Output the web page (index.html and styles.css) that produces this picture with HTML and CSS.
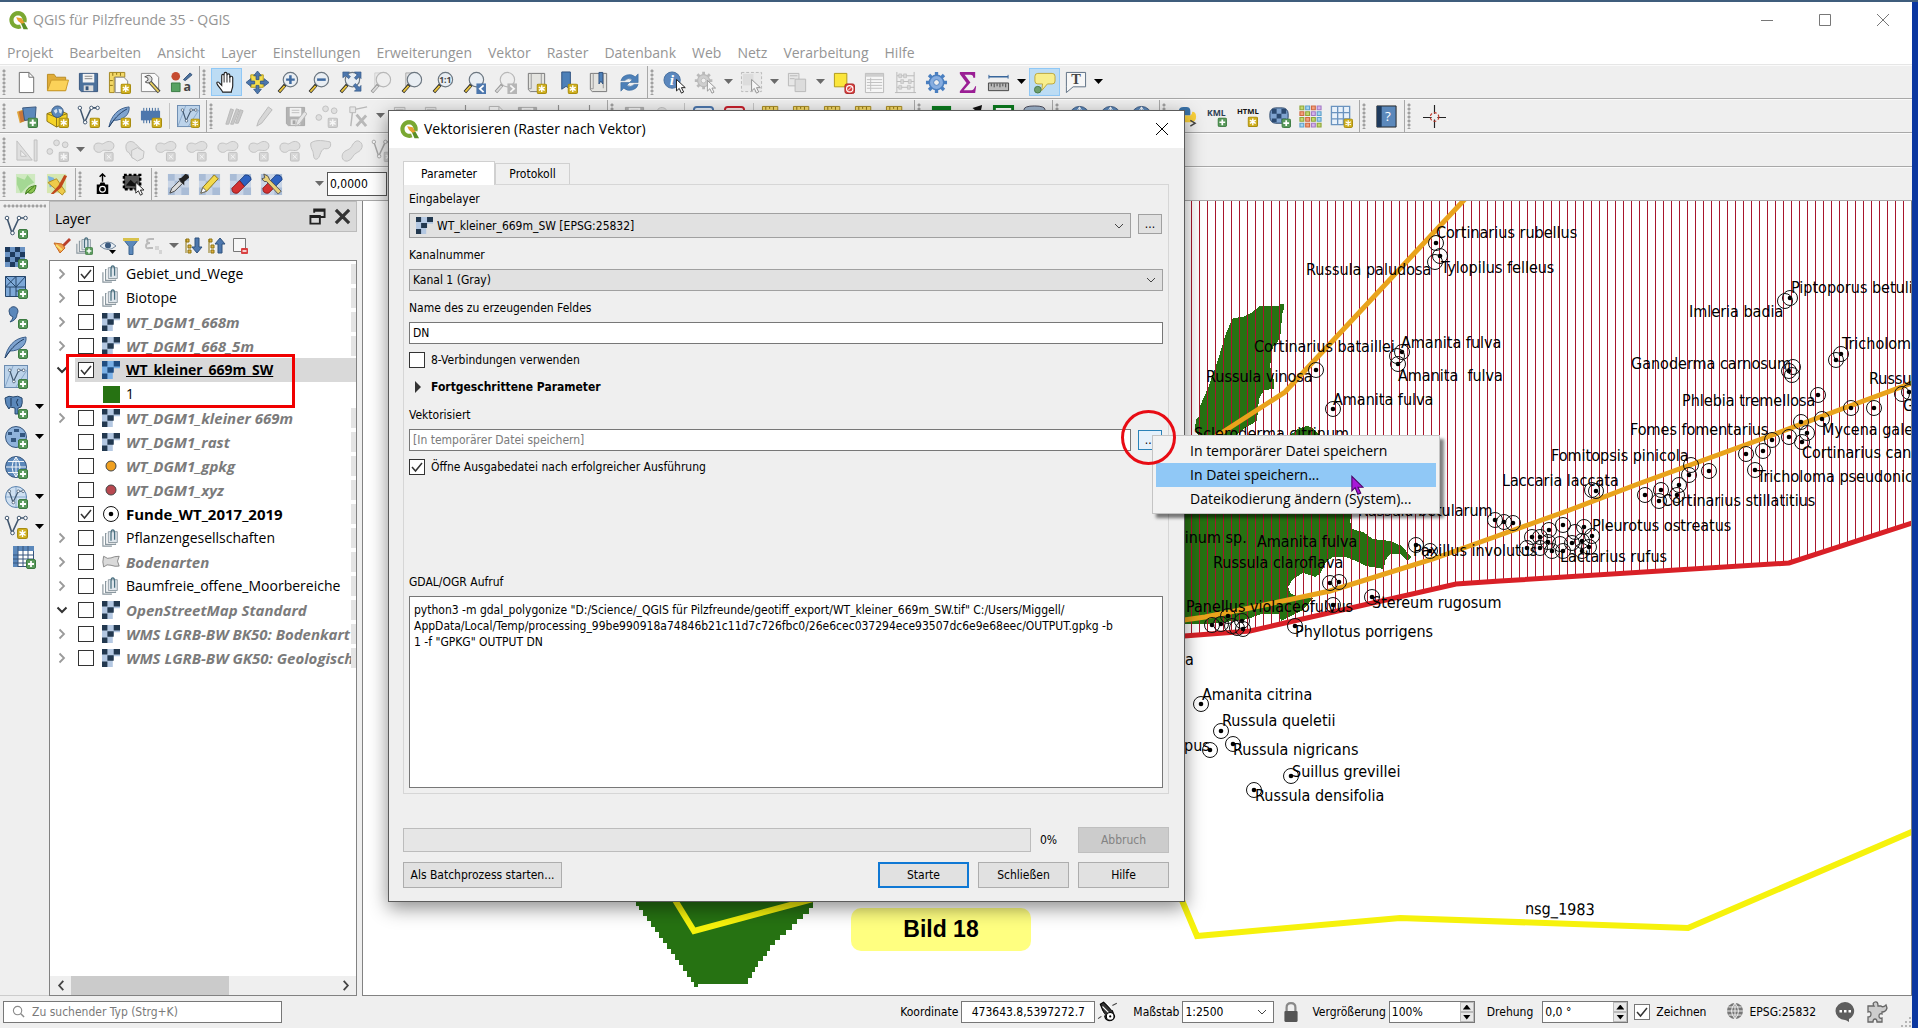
FILE: index.html
```html
<!DOCTYPE html>
<html lang="de">
<head>
<meta charset="utf-8">
<title>QGIS für Pilzfreunde 35 - QGIS</title>
<link rel="stylesheet" href="styles.css">
</head>
<body>
<svg class="defs" aria-hidden="true">
  <symbol id="b-star" viewBox="0 0 10 10"><rect x=".5" y=".5" width="9" height="9" rx="1.5" fill="#d0b020" stroke="#a88c10"/><path d="M5 1.8v6.4M2.2 3.4l5.6 3.2M7.8 3.4L2.2 6.6" stroke="#fff" stroke-width="1.3"/></symbol>
  <symbol id="b-plus" viewBox="0 0 10 10"><rect x=".5" y=".5" width="9" height="9" rx="1.5" fill="#5a9a5c" stroke="#3c7a40"/><path d="M5 2v6M2 5h6" stroke="#fff" stroke-width="1.8"/></symbol>
  <symbol id="glass" viewBox="0 0 24 24"><path d="M9 14l-7 8" stroke="#222" stroke-width="3.5"/><path d="M8 15.500l-5.500 6" stroke="#e8c440" stroke-width="2"/><circle cx="14" cy="9" r="7.500" fill="#e9eef3" stroke="#6b7680" stroke-width="1.200"/></symbol>
  <symbol id="logo" viewBox="0 0 24 24"><path d="M12 4.500a7.500 7.500 0 1 0 3 14.500M19 14a7.500 7.500 0 0 0-7-9.500" fill="none" stroke="#7aa832" stroke-width="4.500"/><path d="M14 13h4l5 9h-5z" fill="#5a8f26"/><path d="M10 9l6 1 3 5-3 1-4-3z" fill="#e8a030"/></symbol>
  <symbol id="new" viewBox="0 0 24 24"><path d="M4.500 1.500h10l5 5v16h-15z" fill="#fff" stroke="#6d6d6d"/><path d="M14.500 1.500v5h5" fill="none" stroke="#6d6d6d"/></symbol>
  <symbol id="open" viewBox="0 0 24 24"><path d="M1.500 20.500v-17h7l2 3h10v14z" fill="#e0ac38" stroke="#b98b22"/><path d="M1.500 20.500l4-11h18l-3 11z" fill="#fbd259" stroke="#c99a2b"/></symbol>
  <symbol id="save" viewBox="0 0 24 24"><path d="M2.500 2.500h19v19h-17l-2-2z" fill="#4c719c" stroke="#36557c"/><path d="M6 3h12v9H6z" fill="#f4f4f4"/><path d="M8 5.500h8M8 8h8" stroke="#888"/><path d="M7 15h10v6H7z" fill="#ddd"/><path d="M9 16h3v4H9z" fill="#36557c"/></symbol>
  <symbol id="layout" viewBox="0 0 24 24"><path d="M1.500 1.500h16v5h-11v16h-5z" fill="#f3d868" stroke="#a3861e"/><path d="M7.500 6.500h9l4 4v12h-13z" fill="#fafafa" stroke="#888"/><path d="M5 2v3M9 2v2M13 2v3M2 10h3M2 15h3" stroke="#8a7010"/><use href="#b-star" x="13" y="13" width="11" height="11"/></symbol>
  <symbol id="layouts" viewBox="0 0 24 24"><path d="M2.500 2.500h14l4 4v15h-18z" fill="#fafafa" stroke="#888"/><path d="M11 11l10 11" stroke="#444" stroke-width="4"/><path d="M11 11l9.500 10.500" stroke="#e8cf60" stroke-width="2"/><path d="M6 6l3 1 .5 2.500-3 2a4.500 4.500 0 0 0 7-2 4 4 0 0 0-4-5z" fill="#ddd" stroke="#555"/></symbol>
  <symbol id="style" viewBox="0 0 24 24"><circle cx="6" cy="5.500" r="4.500" fill="#c64b30"/><path d="M14 9l7-7 2 2-7 6z" fill="#4c719c" stroke="#36557c"/><path d="M1.500 12.500h9v9h-9z" fill="#58a262" stroke="#3a7a44"/><text x="14" y="21" class="icon-text">a</text></symbol>
  <symbol id="hand" viewBox="0 0 24 24"><path d="M8 22c-1-3-5-6-6-9-.5-2 2-2 3 0l2 2V5c0-2 2.500-2 2.500 0V3c0-2 3-2 3 0v1.500c0-2 3-2 3 0V7c0-2 3-2 3 0v8c0 3-1.500 5-1.500 7z" fill="#fff" stroke="#222" stroke-width="1.200"/><path d="M9.500 5v7M12.500 4v8M15.500 5v7" stroke="#222"/></symbol>
  <symbol id="pan" viewBox="0 0 24 24"><path d="M5 4h13v13H5z" fill="#f6dd4a" stroke="#b39a18"/><path d="M12 0l4 5h-2.500v4h-3V5H8zM12 24l4-5h-2.500v-4h-3v4H8zM0 12l5-4v2.500h4v3H5V16zM24 12l-5-4v2.500h-4v3h4V16z" fill="#4d77ad" stroke="#2f527f" stroke-width=".8"/></symbol>
  <symbol id="zin" viewBox="0 0 24 24"><use href="#glass"/><path d="M14 4.500v9M9.500 9h9" stroke="#3f6aa0" stroke-width="2.600"/></symbol>
  <symbol id="zout" viewBox="0 0 24 24"><use href="#glass"/><path d="M9.500 9h9" stroke="#3f6aa0" stroke-width="2.600"/></symbol>
  <symbol id="zfull" viewBox="0 0 24 24"><use href="#glass"/><path d="M4 1h7L9 3l3 3-2 2-3-3-3 2zM23 1v7l-2-2-3 3-2-2 3-3-3-3zM23 21h-7l2-2-3-4 2-2 4 4 2-2z" fill="#4d77ad" stroke="#2f527f" stroke-width=".6"/></symbol>
  <symbol id="zsel" viewBox="0 0 24 24"><path d="M5 2h9v14H5z" fill="#e2e2e2" stroke="#aaa"/><use href="#glass"/></symbol>
  <symbol id="z11" viewBox="0 0 24 24"><use href="#glass"/><text x="7.500" y="13" class="icon-text sm">1:1</text></symbol>
  <symbol id="zlast" viewBox="0 0 24 24"><use href="#glass"/><path d="M14 13h10v11H14z" fill="#4d77ad"/><path d="M21.500 15l-4 3.500 4 3.500" fill="none" stroke="#fff" stroke-width="1.800"/></symbol>
  <symbol id="znext" viewBox="0 0 24 24"><use href="#glass"/><path d="M14 13h10v11H14z" fill="#4d77ad"/><path d="M17 15l4 3.500-4 3.500" fill="none" stroke="#fff" stroke-width="1.800"/></symbol>
  <symbol id="map" viewBox="0 0 24 24"><path d="M3.500 2.500h17v19h-15l-2-2z" fill="#e4e4e0" stroke="#777"/><path d="M6.500 2.500v16h-3M17 3v15" stroke="#999" fill="none"/></symbol>
  <symbol id="mapnew" viewBox="0 0 24 24"><use href="#map"/><use href="#b-star" x="12" y="13" width="11" height="11"/></symbol>
  <symbol id="bmnew" viewBox="0 0 24 24"><path d="M6 1h9v18l-4.500-3L6 19z" fill="#4d80b8" stroke="#2f527f"/><use href="#b-star" x="12" y="13" width="11" height="11"/></symbol>
  <symbol id="bm" viewBox="0 0 24 24"><use href="#map"/><path d="M12.500 1.500h4v12l-2-3-2 3z" fill="#4d80b8" stroke="#2f527f"/></symbol>
  <symbol id="refresh" viewBox="0 0 24 24"><path d="M3 10a9 8 0 0 1 15-4l3-3v9h-9l3-3a6 5 0 0 0-8 1zM21 14a9 8 0 0 1-15 4l-3 3v-9h9l-3 3a6 5 0 0 0 8-1z" fill="#4d80b8" stroke="#3a689c" stroke-width=".6"/></symbol>
  <symbol id="arrowptr" viewBox="0 0 10 14"><path d="M.7.7v10.500l2.500-2.300 2 4.300 2-1-2-4h3.500z" fill="#fff" stroke="#222" stroke-width=".9"/></symbol>
  <symbol id="info" viewBox="0 0 24 24"><circle cx="9.500" cy="9.500" r="8.500" fill="#5b87bd" stroke="#456f9f"/><text x="7" y="15" class="icon-text it">i</text><use href="#arrowptr" x="13" y="8" width="12" height="16"/></symbol>
  <symbol id="gearptr" viewBox="0 0 24 24"><use href="#gear" width="20" height="20"/><use href="#arrowptr" x="13" y="9" width="11" height="15"/></symbol>
  <symbol id="gear" viewBox="0 0 24 24"><path d="M12 1v22M1 12h22M4.200 4.200l15.600 15.600M19.800 4.200L4.200 19.800" stroke="#4a7fc0" stroke-width="3.500"/><circle cx="12" cy="12" r="7.500" fill="#86ade0" stroke="#4a7fc0" stroke-width="1.500"/><circle cx="12" cy="12" r="3" fill="#efefef" stroke="#4a7fc0"/></symbol>
  <symbol id="select" viewBox="0 0 24 24"><path d="M1.500 1.500h21v20h-21z" fill="#e4e4d4" stroke="#777" stroke-dasharray="3 2"/><path d="M3 3h11v12H3z" fill="#c8c8a8"/><use href="#arrowptr" x="11" y="8" width="12" height="16"/></symbol>
  <symbol id="forms" viewBox="0 0 24 24"><path d="M2.500 2.500h11v13h-11z" fill="#ddd" stroke="#777"/><path d="M9.500 8.500h11v13h-11z" fill="#c8c8a8" stroke="#777"/><path d="M4 5h8M4 8h5" stroke="#777"/></symbol>
  <symbol id="desel" viewBox="0 0 24 24"><path d="M2.500 2.500h13v14h-13z" fill="#fbe63c" stroke="#b09a18"/><rect x="13.500" y="13.500" width="10" height="10" rx="2" fill="#d84040" stroke="#a82828"/><circle cx="18.500" cy="18.500" r="3.300" fill="#d84040" stroke="#fff" stroke-width="1.200"/><path d="M16.500 20.500l4-4" stroke="#fff"/></symbol>
  <symbol id="table" viewBox="0 0 24 24"><path d="M2.500 2.500h19v20h-19z" fill="#fff" stroke="#777"/><path d="M3 3h18v3H3z" fill="#9ab"/><path d="M4 9h16M4 12h16M4 15h16M4 18h16M8 7v14" stroke="#888"/></symbol>
  <symbol id="abacus" viewBox="0 0 24 24"><path d="M3 1v22M21 1v22M3 5h18M3 11h18M3 17h18M1 22.500h22" stroke="#777"/><path d="M5 3h3v4H5zM10 3h3v4h-3zM7 9h3v4H7zM15 9h3v4h-3zM5 15h3v4H5zM14 15h3v4h-3z" fill="#bbb" stroke="#777" stroke-width=".6"/></symbol>
  <symbol id="sigma" viewBox="0 0 24 24"><path d="M4 1h16v6h-2c0-2-1-3-3-3H9l6 8-7 8h8c2 0 3-1 4-4h1l-1 7H4v-2l7-8.500L4 3z" fill="#9a1e94"/></symbol>
  <symbol id="ruler" viewBox="0 0 24 24"><path d="M2 6h20" stroke="#39679c" stroke-width="1.600"/><path d="M2 4v4M22 4v4" stroke="#39679c"/><path d="M1.500 12.500h21v8h-21z" fill="#bbb" stroke="#444"/><path d="M4.500 13v3M7.500 13v4M10.500 13v3M13.500 13v4M16.500 13v3M19.500 13v4" stroke="#444"/></symbol>
  <symbol id="tip" viewBox="0 0 24 24"><path d="M5 2.500h15q3 0 3 3v5q0 3-3 3h-5l-6 7 1-7H5q-3 0-3-3v-5q0-3 3-3z" fill="#f8ee8c" stroke="#bca63a"/><circle cx="5" cy="19.500" r="3.500" fill="#6ea06e" stroke="#4a7a4a"/></symbol>
  <symbol id="textann" viewBox="0 0 24 24"><path d="M2.500 1.500h20v15h-13l-7 6v-6z" fill="#f7f7f7" stroke="#5d6f83"/><text x="7.500" y="14" class="icon-text se">T</text></symbol>

  <symbol id="dsm" viewBox="0 0 24 24"><path d="M2 7l9-3 3 11-9 4z" fill="#e0a53a"/><path d="M4 7l9-2 2 10-9 3z" fill="#c8763a"/><path d="M8 3l14-1-1 13-11 1z" fill="#5b88bb" stroke="#36557c"/><use href="#b-plus" x="13" y="13" width="11" height="11"/></symbol>
  <symbol id="geopk" viewBox="0 0 24 24"><path d="M1 9l11-4 10 4v9l-11 5-10-6z" fill="#f5d327" stroke="#8d7410"/><path d="M11 13v10M1 9l10 4 11-4" stroke="#8d7410" fill="none"/><circle cx="12" cy="7" r="6" fill="#5b88bb" stroke="#36557c"/><path d="M8 6l3-2 1 3-2 2zM13 4l4 1-1 4-2-1z" fill="#d4e2f0"/><use href="#b-star" x="13" y="13" width="11" height="11"/></symbol>
  <symbol id="vec" viewBox="0 0 24 24"><path d="M3 3l5 15L15 3h7" fill="none" stroke="#40566e" stroke-width="1.600"/><g fill="#fff" stroke="#40566e"><circle cx="3" cy="3" r="1.800"/><circle cx="8.500" cy="18" r="1.800"/><circle cx="15" cy="3" r="1.800"/><circle cx="21.500" cy="3" r="1.800"/></g></symbol>
  <symbol id="vecnew" viewBox="0 0 24 24"><use href="#vec"/><use href="#b-star" x="13" y="13" width="11" height="11"/></symbol>
  <symbol id="vecadd" viewBox="0 0 24 24"><use href="#vec"/><use href="#b-plus" x="14" y="14" width="10" height="10"/></symbol>
  <symbol id="feather" viewBox="0 0 24 24"><path d="M1 23C3 12 10 3 22 2c1 8-6 14-16 14z" fill="#7ea3cf" stroke="#3b5e8a"/><path d="M1 23C6 15 11 9 20 4" fill="none" stroke="#1f3c60"/></symbol>
  <symbol id="feathernew" viewBox="0 0 24 24"><use href="#feather"/><use href="#b-star" x="13" y="13" width="11" height="11"/></symbol>
  <symbol id="featheradd" viewBox="0 0 24 24"><use href="#feather"/><use href="#b-plus" x="14" y="14" width="10" height="10"/></symbol>
  <symbol id="chip" viewBox="0 0 24 24"><path d="M5 3v16M8 3v16M11 3v16M14 3v16M17 3v16M20 3v16" stroke="#39679c"/><path d="M2 6h20v10H2z" fill="#4d77ad"/><use href="#b-star" x="13" y="13" width="11" height="11"/></symbol>
  <symbol id="meshbox" viewBox="0 0 24 24"><rect x=".5" y=".5" width="23" height="22" fill="#bcd3ea" stroke="#6c8cb0"/><path d="M1 22L9 1M23 5L12 22" stroke="#8aa9cb"/><use href="#vec" x="3" y="3" width="19" height="18"/></symbol>
  <symbol id="virtual" viewBox="0 0 24 24"><use href="#meshbox"/><use href="#b-star" x="14" y="14" width="10" height="10"/></symbol>
  <symbol id="virtualadd" viewBox="0 0 24 24"><use href="#meshbox"/><use href="#b-plus" x="14" y="14" width="10" height="10"/></symbol>
  <symbol id="pencils" viewBox="0 0 24 24"><path d="M4 20L9 4l3 1-5 15zM9 20l6-16 3 1-6 15zM14 19l5-14 3 1-5 13z" fill="#999" stroke="#777"/></symbol>
  <symbol id="pencil" viewBox="0 0 24 24"><path d="M4 22l2-6L16 2l4 3L9 19z" fill="#bbb" stroke="#777"/></symbol>
  <symbol id="saveedit" viewBox="0 0 24 24"><use href="#save"/><path d="M12 22l2-6 7-9 3 2-8 11z" fill="#ddd" stroke="#777"/></symbol>
  <symbol id="nodes" viewBox="0 0 24 24"><g fill="#ccc" stroke="#888"><circle cx="4" cy="13" r="3"/><circle cx="11" cy="4" r="3"/><circle cx="20" cy="6" r="3"/></g><use href="#b-star" x="13" y="13" width="11" height="11"/></symbol>
  <symbol id="vertex" viewBox="0 0 24 24"><path d="M5 22L7 5l15-3" fill="none" stroke="#777" stroke-width="1.500"/><path d="M4 2h6v6H4z" fill="#ddd" stroke="#777"/><path d="M11 10l10 12M21 11L11 22" stroke="#777" stroke-width="3"/></symbol>
  <symbol id="setsq" viewBox="0 0 24 24"><path d="M2 2l16 20H2zM6 12v6h6z" fill="#ccc" fill-rule="evenodd" stroke="#888"/><path d="M20 1h3v22h-3z" fill="#ccc" stroke="#888"/></symbol>
  <symbol id="blob" viewBox="0 0 24 24"><path d="M2 9c0-6 6-5 8-4s5-4 10-2 3 9-2 9-6-1-8 1-8 1-8-4z" fill="#ccc" stroke="#888"/><rect x="13" y="14" width="9" height="9" rx="1" fill="#bbb" stroke="#888"/><path d="M15.500 16.500l4 4M19.500 16.500l-4 4" stroke="#fff"/></symbol>
  <symbol id="blob2" viewBox="0 0 24 24"><path d="M3 8c0-6 7-7 10-3l8 8-3 9-8-2-4-6c-2 0-3-3-3-6z" fill="#ccc" stroke="#888"/><path d="M9 12l6-3 7 4-1 7-6 3-6-4z" fill="#ddd" stroke="#888"/></symbol>
  <symbol id="blob3" viewBox="0 0 24 24"><path d="M2 4c6-4 14-2 20-1 2 5-1 8-6 7-5 2-4 10-8 11s-3-6-4-8-3-6-2-9z" fill="#ccc" stroke="#888"/></symbol>
  <symbol id="blob4" viewBox="0 0 24 24"><path d="M3 15c2-4 7-3 9-7s5-8 9-5 2 9-3 11-5 8-10 9-7-4-5-8z" fill="#ccc" stroke="#888"/></symbol>
  <symbol id="osm" viewBox="0 0 24 24"><path d="M1 1h20v20H1z" fill="#cfe9c0"/><path d="M2 4l8 3 3-5 7 8-6 3-8 8-4-9z" fill="#a4d894"/><path d="M11 22c1-7 6-8 11-9-1 7-5 10-9 7zM11 22l9-8" fill="#8cc450" stroke="#3f7a1e"/></symbol>
  <symbol id="osm2" viewBox="0 0 24 24"><path d="M1 1h20v20H1z" fill="#d6e7b0"/><path d="M2 3l6 2 3 6-7 4z" fill="#79b3e2"/><path d="M2 10l9-4 9 13-3 4z" fill="#eecb4a" stroke="#b58d20"/><path d="M5 22l8-9 6-11 3 1-6 12-8 7z" fill="#c0491c"/></symbol>
  <symbol id="cam" viewBox="0 0 24 24"><path d="M12 1v8M9 4l3-3 3 3" stroke="#000" fill="none" stroke-width="1.500"/><path d="M6 12h3l1-2h4l1 2h3v10H6z" fill="#000"/><circle cx="12" cy="17" r="3" fill="none" stroke="#fff" stroke-width="1.200"/></symbol>
  <symbol id="selmap" viewBox="0 0 24 24"><path d="M2 2h17v15H2z" fill="#555" stroke="#000" stroke-width="2.500" stroke-dasharray="3 2"/><path d="M4 13l5-6 4 4 3-3v6z" fill="#111"/><use href="#arrowptr" x="13" y="9" width="12" height="15"/></symbol>
  <symbol id="chk" viewBox="0 0 24 24"><path d="M1 1h22v22H1z" fill="#c9d5e6"/><path d="M1 1h7v7H1zM8 8h7v7H8zM15 1h8v7h-8zM1 15h7v8H1zM15 15h8v8h-8z" fill="#a9bcd6"/></symbol>
  <symbol id="dropper" viewBox="0 0 24 24"><use href="#chk"/><path d="M3 21l2-5 8-8 3 3-8 8z" fill="#ddd" stroke="#444"/><path d="M12 6l3-1 4-4q4 0 4 4l-5 4 0 4z" fill="#222"/></symbol>
  <symbol id="cpencil" viewBox="0 0 24 24"><use href="#chk"/><path d="M3 21l2-6L17 2l4 4L9 19z" fill="#f3d94c" stroke="#8d7410"/><path d="M3 21l2-6 4 4z" fill="#fff" stroke="#666"/></symbol>
  <symbol id="eraser" viewBox="0 0 24 24"><use href="#chk"/><path d="M11 8l6-6q6 0 6 5l-7 7z" fill="#2e62c0" stroke="#163a7c"/><path d="M11 8l5 6-7 7q-6 1-6-5z" fill="#d33232" stroke="#8c1818"/></symbol>
  <symbol id="tools" viewBox="0 0 24 24"><use href="#eraser"/><path d="M4 1l1 4-3 1q2 4 5 3l12 13 3-3L10 7q0-4-6-6z" fill="#e9d27a" stroke="#555"/></symbol>
  <symbol id="py" viewBox="0 0 24 24"><path d="M4 11V6q0-4 5-4h3q4 0 4 4v5H9q-3 0-3 3z" fill="#3a72a8"/><path d="M9 11h7q2-1 2-4 4 0 4 5t-4 6h-8z" fill="#fbd13a"/><path d="M16 16l5 3-5 3" fill="none" stroke="#444" stroke-width="1.500"/></symbol>
  <symbol id="globe" viewBox="0 0 24 24"><circle cx="12" cy="12" r="10.500" fill="#5b88bb" stroke="#36557c"/><path d="M2 12h20M4 6.500h16M4 17.500h16M12 2v20M12 2q-8 10 0 20M12 2q8 10 0 20" fill="none" stroke="#fff" stroke-width=".9"/></symbol>
  <symbol id="globeadd" viewBox="0 0 24 24"><use href="#globe"/><use href="#b-plus" x="14" y="14" width="10" height="10"/></symbol>
  <symbol id="wms" viewBox="0 0 24 24"><circle cx="12" cy="12" r="10.500" fill="#8fb3dc" stroke="#36557c"/><path d="M4 7h4v3H4zM10 4h5v3h-5zM16 8h5v4h-5zM7 13h5v4H7zM14 15h4v4h-4z" fill="#33567f"/><use href="#b-plus" x="14" y="14" width="10" height="10"/></symbol>
  <symbol id="wfs" viewBox="0 0 24 24"><circle cx="12" cy="12" r="10.500" fill="#cfe0f1" stroke="#5c84b0"/><path d="M2 12h20M12 2v20" stroke="#88a9cc"/><use href="#vec" x="3" y="4" width="18" height="18"/><use href="#b-plus" x="14" y="14" width="10" height="10"/></symbol>
  <symbol id="kml" viewBox="0 0 24 24"><text x="1" y="11" class="icon-text xs">KML</text><use href="#b-plus" x="12" y="13" width="10" height="10"/></symbol>
  <symbol id="html" viewBox="0 0 24 24"><text x="0" y="9" class="icon-text xs bk">HTML</text><use href="#b-star" x="11" y="12" width="11" height="11"/></symbol>
  <symbol id="rglobe" viewBox="0 0 24 24"><rect x="2" y="3" width="19" height="16" rx="6" fill="#7ea3cf" stroke="#223f63"/><path d="M4 4h5v5H4zM14 4h5v5h-5zM9 9h5v5H9zM4 14h5v4H4zM14 14h5v4h-5z" fill="#2b4a70"/><use href="#b-plus" x="14" y="14" width="10" height="10"/></symbol>
  <symbol id="cgrid" viewBox="0 0 24 24"><g stroke-width="1.200"><path d="M1 1h4v4H1zM7 7h4v4H7zM13 13h4v4h-4zM19 19h4v4h-4zM1 13h4v4H1z" fill="#c3d870" stroke="#8fa63a"/><path d="M7 1h4v4H7zM19 7h4v4h-4zM19 13h4v4h-4zM1 19h4v4H1z" fill="#a5d5f0" stroke="#5fa0cc"/><path d="M13 1h4v4h-4zM1 7h4v4H1zM7 19h4v4H7zM7 13h4v4H7z" fill="#f2a07c" stroke="#cf6a43"/><path d="M19 1h4v4h-4zM13 7h4v4h-4zM13 19h4v4h-4z" fill="#d6b5ec" stroke="#a57bc6"/></g></symbol>
  <symbol id="grid" viewBox="0 0 24 24"><path d="M1.500 1.500h19v19h-19zM1.500 8h19M1.500 14.500h19M8 1.500v19M14 1.500v19" fill="#e8f1fa" stroke="#6a93bf" stroke-width="1.400"/><use href="#b-star" x="14" y="14" width="10" height="10"/></symbol>
  <symbol id="help" viewBox="0 0 24 24"><path d="M2 1h20v22H2z" fill="#5b88bb" stroke="#222"/><path d="M2 1h5v22H2z" fill="#1e3a5c"/><text x="10.500" y="17" class="icon-text wh">?</text></symbol>
  <symbol id="cross" viewBox="0 0 24 24"><path d="M12 0v9M12 15v9M0 13h9M15 13h9" stroke="#222" stroke-width="1.200"/><circle cx="12" cy="12.500" r="4.500" fill="none" stroke="#c0392b" stroke-width="1.200" stroke-dasharray="3 2"/></symbol>

  <symbol id="rast" viewBox="0 0 20 20"><path d="M0 0h20v8h-7v4h-1v8H0z" fill="#b4c8e2"/><path d="M0 0h6v6H0zM13 0h7v6h-7zM6 7h7v6H6zM0 14h6v6H0z" fill="#22384f"/></symbol>
  <symbol id="rastsel" viewBox="0 0 20 20"><path d="M0 0h20v8h-7v4h-1v8H0z" fill="#7ab0e6"/><path d="M0 0h6v6H0zM13 0h7v6h-7zM6 7h7v6H6zM0 14h6v6H0z" fill="#1f4c80"/></symbol>
  <symbol id="rastadd" viewBox="0 0 24 24"><path d="M1 2h20v20H1z" fill="#6b93c3"/><path d="M1 2h5v5H1zM11 2h5v5h-5zM6 7h5v5H6zM16 7h5v5h-5zM1 12h5v5H1zM11 12h5v5h-5zM6 17h5v5H6z" fill="#1e3b5e"/><use href="#b-plus" x="14" y="14" width="10" height="10"/></symbol>
  <symbol id="meshadd" viewBox="0 0 24 24"><path d="M1.500 1.500h20v20h-20z" fill="#7ea9d8" stroke="#26466b"/><path d="M1.500 12h20M12 1.500v20M1.500 1.500L12 12M12 1.500L1.500 12M21.500 1.500L12 12M6 12v9M12 16h9" stroke="#26466b" fill="none"/><use href="#b-plus" x="14" y="14" width="10" height="10"/></symbol>
  <symbol id="commaadd" viewBox="0 0 24 24"><path d="M5 6a4.500 4.500 0 1 1 8 3q0 6-7 8 3-3 3-5-4-1-4-6z" fill="#5b88bb" stroke="#36557c"/><use href="#b-plus" x="14" y="14" width="10" height="10"/></symbol>
  <symbol id="pgadd" viewBox="0 0 24 24"><path d="M1 3q4-3 8-1 5-2 9 1 1 5-1 9l-3 1v6h-3v-6L6 12 5 14Q1 10 1 3z" fill="#5b88bb" stroke="#27476c"/><path d="M7 3v8M14 4q-3 3 0 7" stroke="#1c3554" fill="none"/><use href="#b-plus" x="14" y="14" width="10" height="10"/></symbol>
  <symbol id="tabadd" viewBox="0 0 24 24"><path d="M1.500 1.500h20v20h-20z" fill="#fff" stroke="#36557c"/><path d="M1 1h21v5H1zM1 6h5v16H1z" fill="#5b88bb"/><path d="M1 10h21M1 14h21M1 18h21M6 1v21M11 1v21M16 1v21" stroke="#36557c"/><use href="#b-plus" x="14" y="14" width="10" height="10"/></symbol>
  <symbol id="group" viewBox="0 0 20 20"><path d="M1 8v11h10M5 5h-1v12h11v-1" fill="none" stroke="#8a979f" stroke-width="1.300"/><path d="M7 3h10v12H7z" fill="#dfe6ec" stroke="#8a979f"/><path d="M10 13V5q0-4 2-4t2 4v7" fill="none" stroke="#4a7080" stroke-width="1.400"/></symbol>
  <symbol id="poly" viewBox="0 0 22 18"><path d="M2 2q5 4 9 2t10-2l-2 6 2 6q-5 1-10-1t-9 2q-2-6 0-13z" fill="#dadada" stroke="#777"/></symbol>
  <symbol id="pt" viewBox="0 0 18 18"><circle cx="9" cy="9" r="7.500" fill="none" stroke="#111"/><circle cx="9" cy="9" r="2.300" fill="#000"/></symbol>
  <symbol id="ring" viewBox="0 0 18 18"><circle cx="9" cy="9" r="7.500" fill="none" stroke="#111"/></symbol>
  <symbol id="cr" viewBox="0 0 10 16"><path d="M2.500 3.500L7 8l-4.500 4.500" fill="none" stroke="#9a9a9a" stroke-width="1.800"/></symbol>
  <symbol id="cd" viewBox="0 0 12 16"><path d="M1.500 5.500L6 10l4.500-4.500" fill="none" stroke="#333" stroke-width="2"/></symbol>
</svg>

<div class="window">
  <header class="titlebar">
    <svg class="logo"><use href="#logo"/></svg>
    <span class="title">QGIS für Pilzfreunde 35 - QGIS</span>
    <div class="winctl">
      <button aria-label="Minimieren"><svg viewBox="0 0 12 12"><path d="M0 6.500h12"/></svg></button>
      <button aria-label="Maximieren"><svg viewBox="0 0 12 12"><path d="M.5.500h11v11H.5z"/></svg></button>
      <button aria-label="Schließen"><svg viewBox="0 0 12 12"><path d="M0 0l12 12M12 0L0 12"/></svg></button>
    </div>
  </header>
  <nav class="menubar">
    <a href="#">Projekt</a><a href="#">Bearbeiten</a><a href="#">Ansicht</a><a href="#">Layer</a><a href="#">Einstellungen</a><a href="#">Erweiterungen</a><a href="#">Vektor</a><a href="#">Raster</a><a href="#">Datenbank</a><a href="#">Web</a><a href="#">Netz</a><a href="#">Verarbeitung</a><a href="#">Hilfe</a>
  </nav>

  <div class="toolrow">
    <div class="group"><i class="grip"></i>
      <button class="tb"><svg><use href="#new"/></svg></button><button class="tb"><svg><use href="#open"/></svg></button><button class="tb"><svg><use href="#save"/></svg></button><button class="tb"><svg><use href="#layout"/></svg></button><button class="tb"><svg><use href="#layouts"/></svg></button><button class="tb"><svg><use href="#style"/></svg></button>
    </div>
    <div class="group"><i class="grip"></i>
      <button class="tb on"><svg><use href="#hand"/></svg></button><button class="tb"><svg><use href="#pan"/></svg></button><button class="tb"><svg><use href="#zin"/></svg></button><button class="tb"><svg><use href="#zout"/></svg></button><button class="tb"><svg><use href="#zfull"/></svg></button><button class="tb off"><svg><use href="#zsel"/></svg></button><button class="tb"><svg><use href="#zsel"/></svg></button><button class="tb"><svg><use href="#z11"/></svg></button><button class="tb"><svg><use href="#zlast"/></svg></button><button class="tb off"><svg><use href="#znext"/></svg></button><button class="tb"><svg><use href="#mapnew"/></svg></button><button class="tb"><svg><use href="#bmnew"/></svg></button><button class="tb"><svg><use href="#bm"/></svg></button><button class="tb"><svg><use href="#refresh"/></svg></button>
    </div>
    <div class="group open"><i class="grip"></i>
      <button class="tb"><svg><use href="#info"/></svg></button><button class="tb off"><svg><use href="#gearptr"/></svg></button><i class="drop dim"></i><button class="tb off"><svg><use href="#select"/></svg></button><i class="drop dim"></i><button class="tb off"><svg><use href="#forms"/></svg></button><i class="drop dim"></i><button class="tb"><svg><use href="#desel"/></svg></button><button class="tb off"><svg><use href="#table"/></svg></button><button class="tb off"><svg><use href="#abacus"/></svg></button><button class="tb"><svg><use href="#gear"/></svg></button><button class="tb"><svg><use href="#sigma"/></svg></button><button class="tb"><svg><use href="#ruler"/></svg></button><i class="drop"></i><button class="tb on"><svg><use href="#tip"/></svg></button><button class="tb"><svg><use href="#textann"/></svg></button><i class="drop"></i>
    </div>
  </div>

  <div class="toolrow">
    <div class="group"><i class="grip"></i>
      <button class="tb"><svg><use href="#dsm"/></svg></button><button class="tb"><svg><use href="#geopk"/></svg></button><button class="tb"><svg><use href="#vecnew"/></svg></button><button class="tb"><svg><use href="#feathernew"/></svg></button><button class="tb"><svg><use href="#chip"/></svg></button><i class="sep"></i><button class="tb"><svg><use href="#virtual"/></svg></button>
    </div>
    <div class="group"><i class="grip"></i>
      <button class="tb off"><svg><use href="#pencils"/></svg></button><button class="tb off"><svg><use href="#pencil"/></svg></button><button class="tb off"><svg><use href="#saveedit"/></svg></button><button class="tb off"><svg><use href="#nodes"/></svg></button><button class="tb off"><svg><use href="#vertex"/></svg></button><i class="drop dim"></i><button class="tb off"><svg><use href="#forms"/></svg></button><button class="tb off"><svg><use href="#forms"/></svg></button><button class="tb off"><svg><use href="#cross"/></svg></button><button class="tb off"><svg><use href="#new"/></svg></button><button class="tb off"><svg><use href="#save"/></svg></button><button class="tb off"><svg><use href="#cross"/></svg></button><button class="tb off"><svg><use href="#cross"/></svg></button>
    </div>
    <div class="group"><i class="grip"></i>
      <button class="tb off"><svg><use href="#save"/></svg></button><button class="tb off"><svg><use href="#blob2"/></svg></button><i class="sep"></i><button class="tb"><svg viewBox="0 0 24 24"><rect x="2" y="2" width="20" height="20" rx="3" fill="#e4ecf6" stroke="#4d77ad" stroke-width="2"/></svg></button><button class="tb"><svg viewBox="0 0 24 24"><rect x="2" y="2" width="20" height="20" rx="3" fill="#f6e4e4" stroke="#c8202c" stroke-width="2"/></svg></button><i class="sep"></i><button class="tb"><svg><use href="#layout"/></svg></button><button class="tb"><svg><use href="#layout"/></svg></button><button class="tb"><svg><use href="#layout"/></svg></button><button class="tb"><svg><use href="#layout"/></svg></button><button class="tb"><svg><use href="#layout"/></svg></button>
    </div>
    <div class="group"><i class="grip"></i>
      <button class="tb"><svg viewBox="0 0 24 24"><path d="M2 1h20v20H2z" fill="#0b7a1e"/></svg></button><button class="tb"><svg viewBox="0 0 24 24"><path d="M12 3l10-3-2 10z" fill="#111"/></svg></button><button class="tb"><svg viewBox="0 0 24 24"><path d="M2.500 1.500h19v19h-19z" fill="#fff" stroke="#0b7a1e" stroke-width="3"/></svg></button><button class="tb"><svg viewBox="0 0 24 24"><path d="M1 5q0-4 11-4t11 4v16H1z" fill="#9fb4cc" stroke="#445"/></svg></button>
    </div>
    <div class="group"><i class="grip"></i>
      <button class="tb"><svg><use href="#globe"/></svg></button><button class="tb"><svg><use href="#globe"/></svg></button><button class="tb"><svg><use href="#globe"/></svg></button>
    </div>
    <div class="group"><i class="grip"></i>
      <button class="tb"><svg><use href="#py"/></svg></button><button class="tb"><svg><use href="#kml"/></svg></button><button class="tb"><svg><use href="#html"/></svg></button><button class="tb"><svg><use href="#rglobe"/></svg></button><button class="tb"><svg><use href="#cgrid"/></svg></button><button class="tb"><svg><use href="#grid"/></svg></button>
    </div>
    <div class="group"><i class="grip"></i><button class="tb"><svg><use href="#help"/></svg></button></div>
    <div class="group open"><i class="grip"></i><button class="tb wide"><svg><use href="#cross"/></svg></button></div>
  </div>

  <div class="toolrow">
    <div class="group open"><i class="grip"></i>
      <button class="tb off"><svg><use href="#setsq"/></svg></button><button class="tb off"><svg><use href="#nodes"/></svg></button><i class="drop dim"></i><button class="tb off"><svg><use href="#blob"/></svg></button><button class="tb off"><svg><use href="#blob2"/></svg></button><button class="tb off"><svg><use href="#blob"/></svg></button><button class="tb off"><svg><use href="#blob"/></svg></button><button class="tb off"><svg><use href="#blob"/></svg></button><button class="tb off"><svg><use href="#blob"/></svg></button><button class="tb off"><svg><use href="#blob"/></svg></button><button class="tb off"><svg><use href="#blob3"/></svg></button><button class="tb off"><svg><use href="#blob4"/></svg></button><button class="tb off"><svg><use href="#vecnew"/></svg></button>
    </div>
  </div>

  <div class="toolrow">
    <div class="group"><i class="grip"></i><button class="tb"><svg><use href="#osm"/></svg></button><button class="tb"><svg><use href="#osm2"/></svg></button></div>
    <div class="group"><i class="grip"></i><button class="tb"><svg><use href="#cam"/></svg></button><button class="tb"><svg><use href="#selmap"/></svg></button></div>
    <div class="group open"><i class="grip"></i><button class="tb"><svg><use href="#dropper"/></svg></button><button class="tb"><svg><use href="#cpencil"/></svg></button><button class="tb"><svg><use href="#eraser"/></svg></button><button class="tb"><svg><use href="#tools"/></svg></button><i class="gap"></i><i class="drop dim"></i><input class="value" value="0,0000" aria-label="Rasterwert"></div>
  </div>

  <main class="work">
    <aside class="sidebar">
      <i class="hgrip"></i>
      <div class="srow"><button class="sb"><svg><use href="#vecadd"/></svg></button></div>
      <div class="srow"><button class="sb"><svg><use href="#rastadd"/></svg></button></div>
      <div class="srow"><button class="sb"><svg><use href="#meshadd"/></svg></button></div>
      <div class="srow"><button class="sb"><svg><use href="#commaadd"/></svg></button></div>
      <div class="srow"><button class="sb"><svg><use href="#featheradd"/></svg></button></div>
      <div class="srow"><button class="sb"><svg><use href="#virtualadd"/></svg></button></div>
      <div class="srow"><button class="sb"><svg><use href="#pgadd"/></svg></button><i class="drop"></i></div>
      <div class="srow"><button class="sb"><svg><use href="#wms"/></svg></button><i class="drop"></i></div>
      <div class="srow"><button class="sb"><svg><use href="#globeadd"/></svg></button></div>
      <div class="srow"><button class="sb"><svg><use href="#wfs"/></svg></button><i class="drop"></i></div>
      <div class="srow"><button class="sb"><svg><use href="#vecnew"/></svg></button><i class="drop"></i></div>
      <div class="srow mid"><button class="sb"><svg><use href="#tabadd"/></svg></button></div>
    </aside>

    <section class="dock">
      <div class="dock-title"><h2>Layer</h2>
        <button aria-label="Abdocken"><svg viewBox="0 0 18 18"><path d="M5.500 5V1.500h11v8H12M5 3h12M1.500 8.500h10v8h-10zM1 9.500h11" fill="none" stroke="#222" stroke-width="2"/></svg></button>
        <button aria-label="Schließen"><svg viewBox="0 0 18 18"><path d="M2 2l14 14M16 2L2 16" stroke="#333" stroke-width="3.400"/></svg></button>
      </div>
      <div class="dock-tools">
        <button><svg viewBox="0 0 18 18"><path d="M9 8l7-7 2 2-7 7z" fill="#b8402c"/><path d="M1 6l8 1 3 4-5 5q-3-5-6-10z" fill="#f0a04c" stroke="#c76a24"/><path d="M3 8l6 5" stroke="#f9e06a" stroke-width="2"/></svg></button>
        <button><svg><use href="#group" width="17" height="17"/><use href="#b-plus" x="9" y="10" width="8" height="8"/></svg></button>
        <button><svg viewBox="0 0 18 18"><path d="M1 9q8-8 16 0-8 7-16 0z" fill="#e6edf4" stroke="#72879c"/><circle cx="9" cy="8.500" r="3" fill="#39597e"/><path d="M10 13h7l-3.500 4z"/></svg></button>
        <button><svg viewBox="0 0 18 18"><path d="M1.500 2.500h15l-5.500 7v8H7v-8z" fill="#5b88bb" stroke="#3d648f"/><path d="M1 1h16v3H1z" fill="#d8c24c"/></svg></button>
        <button class="off"><svg viewBox="0 0 18 18"><path d="M9 2H5Q2 2 2 4t3 2Q1 6 1 9t3 2h4" fill="none" stroke="#888" stroke-width="2"/><path d="M10 9h4v4h-4zM14 13h3v4h-3z" fill="#bbb"/></svg></button>
        <i class="drop dim"></i>
        <button><svg viewBox="0 0 18 18"><path d="M1 2h3v3H1zM3 8h3v3H3zM3 13h3v3H3zM1 2v14" fill="#e0b040" stroke="#8d7410"/><path d="M10 1h4v9h3l-5 6-5-6h3z" fill="#4d77ad" stroke="#2f527f"/></svg></button>
        <button><svg viewBox="0 0 18 18"><path d="M1 2h3v3H1zM3 8h3v3H3zM3 13h3v3H3zM1 2v14" fill="#e0b040" stroke="#8d7410"/><path d="M10 16h4V7h3l-5-6-5 6h3z" fill="#4d77ad" stroke="#2f527f"/></svg></button>
        <button><svg viewBox="0 0 18 18"><path d="M2.500 1.500h12v13h-12z" fill="#f7f7f7" stroke="#777"/><rect x="10" y="11" width="7" height="6" rx="1" fill="#d84040"/><path d="M11.500 14h4" stroke="#fff" stroke-width="1.500"/></svg></button>
      </div>
      <ul class="tree">
        <li><label><svg class="tw"><use href="#cr"/></svg><input type="checkbox" checked><svg class="ic"><use href="#group"/></svg><span>Gebiet_und_Wege</span></label></li>
        <li><label><svg class="tw"><use href="#cr"/></svg><input type="checkbox"><svg class="ic"><use href="#group"/></svg><span>Biotope</span></label></li>
        <li class="dim"><label><svg class="tw"><use href="#cr"/></svg><input type="checkbox"><svg class="ic"><use href="#rast"/></svg><span>WT_DGM1_668m</span></label></li>
        <li class="dim"><label><svg class="tw"><use href="#cr"/></svg><input type="checkbox"><svg class="ic"><use href="#rast"/></svg><span>WT_DGM1_668_5m</span></label></li>
        <li class="sel"><label><svg class="tw"><use href="#cd"/></svg><input type="checkbox" checked><svg class="ic"><use href="#rastsel"/></svg><span>WT_kleiner_669m_SW</span></label></li>
        <li class="legend"><i class="swatch"></i><span>1</span></li>
        <li class="dim"><label><svg class="tw"><use href="#cr"/></svg><input type="checkbox"><svg class="ic"><use href="#rast"/></svg><span>WT_DGM1_kleiner 669m</span></label></li>
        <li class="dim"><label><svg class="tw"></svg><input type="checkbox"><svg class="ic"><use href="#rast"/></svg><span>WT_DGM1_rast</span></label></li>
        <li class="dim"><label><svg class="tw"></svg><input type="checkbox"><svg class="ic" viewBox="0 0 18 18"><circle cx="9" cy="9" r="5" fill="#f0a020" stroke="#444"/></svg><span>WT_DGM1_gpkg</span></label></li>
        <li class="dim"><label><svg class="tw"></svg><input type="checkbox"><svg class="ic" viewBox="0 0 18 18"><circle cx="9" cy="9" r="5" fill="#b84850" stroke="#444"/></svg><span>WT_DGM1_xyz</span></label></li>
        <li class="strong"><label><svg class="tw"></svg><input type="checkbox" checked><svg class="ic"><use href="#pt"/></svg><span>Funde_WT_2017_2019</span></label></li>
        <li><label><svg class="tw"><use href="#cr"/></svg><input type="checkbox"><svg class="ic"><use href="#group"/></svg><span>Pflanzengesellschaften</span></label></li>
        <li class="dim"><label><svg class="tw"><use href="#cr"/></svg><input type="checkbox"><svg class="ic"><use href="#poly"/></svg><span>Bodenarten</span></label></li>
        <li><label><svg class="tw"><use href="#cr"/></svg><input type="checkbox"><svg class="ic"><use href="#group"/></svg><span>Baumfreie_offene_Moorbereiche</span></label></li>
        <li class="dim"><label><svg class="tw"><use href="#cd"/></svg><input type="checkbox"><svg class="ic"><use href="#rast"/></svg><span>OpenStreetMap Standard</span></label></li>
        <li class="dim"><label><svg class="tw"><use href="#cr"/></svg><input type="checkbox"><svg class="ic"><use href="#rast"/></svg><span>WMS LGRB-BW BK50: Bodenkart</span></label></li>
        <li class="dim"><label><svg class="tw"><use href="#cr"/></svg><input type="checkbox"><svg class="ic"><use href="#rast"/></svg><span>WMS LGRB-BW GK50: Geologisch</span></label></li>
      </ul>
      <div class="hscroll">
        <button aria-label="Nach links"><svg viewBox="0 0 8 12"><path d="M6.500 1L2 6l4.500 5"/></svg></button>
        <div class="track"><i class="thumb"></i></div>
        <button aria-label="Nach rechts"><svg viewBox="0 0 8 12"><path d="M1.500 1L6 6l-4.500 5"/></svg></button>
      </div>
    </section>

    <section class="canvas">
      <svg viewBox="363 202 1549 794" preserveAspectRatio="xMinYMin slice" role="img" aria-label="Karte">
        <defs><pattern id="hatch" width="8" height="8" patternUnits="userSpaceOnUse"><rect x="7" width="1" height="8" fill="#a8162c"/></pattern></defs>
        <g fill="#267212" shape-rendering="crispEdges">
          <path d="M1260 307h20v-2h4v5l-2 5-1 18-3 10-5 4-3 20 4 15v8l-10 1-5 9-2 22-15 9-10 9h-32l-5-10 1-10 4-3v-10l8-18 9-25 3-10 6-20 7-15 10-1 8-4z"/>
          <path d="M1288 438l10-8 8-3 6 1 7 8z"/>
          <path d="M1184 500h172l-6 22 2 8 11 3 10 7 17 2 12 5 9 11-3 4-8-7h-10l-5 7-1 8-18-3-10-5-10-4h-13l-7 5-6 12-5 3-12-4-10 6-5 8 3 7 9 3 13 1-4 5-8 8-20 10-2-7h-18l-13 5-14 2-28 3h-21z"/>
          <path d="M633 890v12h3v5h3v4h4v6h4v5h4v6h4v5h4v6h4v5h4v6h4v5h4v6h4v5h4v6h4v6h4v5h3v5h4v-3h50v-6h4v-6h3v-5h3v-6h5v-5h4v-5h3v-6h5v-5h5v-5h6v-5h6v-6h5v-5h6v-5h6v-6h4v-6h1v-12z"/>
        </g>
        <path d="M1100 202h812v322l-123 40-289 18-44 3-206 47-66 6h-84z" fill="url(#hatch)"/>
        <path d="M1140 641l44-4 66-5 206-47 44-3 289-18 123-40" fill="none" stroke="#d92027" stroke-width="5"/>
        <path d="M1465 200l-180 193-62 40-40 26M1140 621h44l21-3 45-9 80-17 103-32 67-24 67-24 71-27 129-47 53-20 92-34" fill="none" stroke="#e9a31c" stroke-width="5"/>
        <path d="M667 888l27 44 130-35M1173 880l24 57 203-18 288 10 226-97" fill="none" stroke="#f6f20c" stroke-width="6"/>
        <g>
          <use href="#pt" x="1427" y="235" width="18" height="18"/><use href="#pt" x="1431" y="248" width="18" height="18"/><use href="#ring" x="1426" y="254" width="18" height="18"/><use href="#pt" x="1393" y="344" width="18" height="18"/><use href="#pt" x="1389" y="356" width="18" height="18"/><use href="#ring" x="1388" y="348" width="18" height="18"/><use href="#pt" x="1307" y="362" width="18" height="18"/><use href="#pt" x="1324" y="401" width="18" height="18"/><use href="#pt" x="1486" y="512" width="18" height="18"/><use href="#pt" x="1495" y="514" width="18" height="18"/><use href="#pt" x="1504" y="515" width="18" height="18"/><use href="#pt" x="1407" y="537" width="18" height="18"/><use href="#pt" x="1421" y="543" width="18" height="18"/>
          <use href="#pt" x="1781" y="290" width="18" height="18"/><use href="#ring" x="1776" y="293" width="18" height="18"/><use href="#pt" x="1832" y="346" width="18" height="18"/><use href="#pt" x="1827" y="352" width="18" height="18"/><use href="#pt" x="1780" y="363" width="18" height="18"/><use href="#ring" x="1784" y="359" width="18" height="18"/><use href="#ring" x="1783" y="367" width="18" height="18"/><use href="#pt" x="1809" y="387" width="18" height="18"/><use href="#pt" x="1842" y="400" width="18" height="18"/><use href="#pt" x="1865" y="400" width="18" height="18"/><use href="#ring" x="1893" y="386" width="18" height="18"/><use href="#pt" x="1900" y="384" width="18" height="18"/><use href="#pt" x="1813" y="411" width="18" height="18"/><use href="#pt" x="1792" y="414" width="18" height="18"/><use href="#pt" x="1798" y="425" width="18" height="18"/><use href="#pt" x="1793" y="434" width="18" height="18"/><use href="#pt" x="1780" y="429" width="18" height="18"/><use href="#pt" x="1763" y="432" width="18" height="18"/><use href="#pt" x="1754" y="443" width="18" height="18"/><use href="#pt" x="1737" y="446" width="18" height="18"/><use href="#pt" x="1746" y="462" width="18" height="18"/><use href="#pt" x="1700" y="463" width="18" height="18"/><use href="#pt" x="1680" y="467" width="18" height="18"/><use href="#ring" x="1682" y="457" width="18" height="18"/><use href="#pt" x="1670" y="477" width="18" height="18"/><use href="#pt" x="1668" y="487" width="18" height="18"/><use href="#pt" x="1652" y="482" width="18" height="18"/><use href="#pt" x="1636" y="487" width="18" height="18"/><use href="#pt" x="1650" y="493" width="18" height="18"/><use href="#pt" x="1587" y="483" width="18" height="18"/><use href="#ring" x="1583" y="482" width="18" height="18"/>
          <use href="#pt" x="1523" y="529" width="18" height="18"/><use href="#pt" x="1540" y="522" width="18" height="18"/><use href="#pt" x="1554" y="517" width="18" height="18"/><use href="#pt" x="1575" y="519" width="18" height="18"/><use href="#pt" x="1583" y="528" width="18" height="18"/><use href="#pt" x="1518" y="540" width="18" height="18"/><use href="#pt" x="1531" y="540" width="18" height="18"/><use href="#pt" x="1531" y="529" width="18" height="18"/><use href="#pt" x="1539" y="534" width="18" height="18"/><use href="#pt" x="1543" y="543" width="18" height="18"/><use href="#pt" x="1554" y="543" width="18" height="18"/><use href="#pt" x="1563" y="535" width="18" height="18"/><use href="#ring" x="1566" y="524" width="18" height="18"/><use href="#pt" x="1573" y="533" width="18" height="18"/><use href="#pt" x="1573" y="543" width="18" height="18"/><use href="#pt" x="1580" y="539" width="18" height="18"/><use href="#ring" x="1551" y="536" width="18" height="18"/>
          <use href="#pt" x="1321" y="575" width="18" height="18"/><use href="#pt" x="1330" y="574" width="18" height="18"/><use href="#pt" x="1324" y="597" width="18" height="18"/><use href="#pt" x="1363" y="589" width="18" height="18"/><use href="#pt" x="1203" y="617" width="18" height="18"/><use href="#pt" x="1212" y="616" width="18" height="18"/><use href="#pt" x="1219" y="608" width="18" height="18"/><use href="#pt" x="1233" y="613" width="18" height="18"/><use href="#ring" x="1228" y="620" width="18" height="18"/><use href="#pt" x="1234" y="621" width="18" height="18"/><use href="#ring" x="1223" y="618" width="18" height="18"/><use href="#pt" x="1286" y="618" width="18" height="18"/><use href="#pt" x="1192" y="696" width="18" height="18"/><use href="#pt" x="1212" y="723" width="18" height="18"/><use href="#pt" x="1201" y="742" width="18" height="18"/><use href="#pt" x="1224" y="736" width="18" height="18"/><use href="#pt" x="1282" y="768" width="18" height="18"/><use href="#pt" x="1245" y="782" width="18" height="18"/>
        </g>
        <g class="labels">
          <text x="1436" y="239">Cortinarius rubellus</text><text x="1306" y="276">Russula paludosa</text><text x="1441" y="274">Tylopilus felleus</text>
          <text x="1254" y="353">Cortinarius bataillei</text><text x="1401" y="349">Amanita fulva</text><text x="1206" y="383">Russula vinosa</text><text x="1398" y="382" xml:space="preserve">Amanita  fulva</text><text x="1333" y="406">Amanita fulva</text><text x="1194" y="440">Scleroderma citrinum</text>
          <text x="1502" y="487">Laccaria laccata</text><text x="1358" y="517">Russula betularum</text><text x="1179" y="544">tinum sp.</text><text x="1257" y="548">Amanita fulva</text><text x="1413" y="557">Paxillus involutus</text><text x="1213" y="569">Russula claroflava</text><text x="1186" y="613">Panellus violaceofulvus</text><text x="1372" y="609">Stereum rugosum</text><text x="1295" y="638">Phyllotus porrigens</text>
          <text x="1185" y="666">a</text><text x="1202" y="701">Amanita citrina</text><text x="1222" y="727">Russula queletii</text><text x="1184" y="752">pus</text><text x="1233" y="756">Russula nigricans</text><text x="1292" y="778">Suillus grevillei</text><text x="1255" y="802">Russula densifolia</text>
          <text x="1791" y="294">Piptoporus betuli</text><text x="1689" y="318">Imleria badia</text><text x="1842" y="350">Tricholom</text><text x="1631" y="370">Ganoderma carnosum</text><text x="1869" y="385">Russu</text><text x="1682" y="407">Phlebia tremellosa</text><text x="1903" y="412">G</text><text x="1630" y="436">Fomes fomentarius</text><text x="1822" y="436">Mycena gale</text><text x="1551" y="462">Fomitopsis pinicola</text><text x="1802" y="459">Cortinarius can</text><text x="1757" y="483">Tricholoma pseudonic</text><text x="1662" y="507">Cortinarius stillatitius</text><text x="1592" y="532">Pleurotus ostreatus</text><text x="1560" y="563">Lactarius rufus</text>
          <text x="1525" y="915" transform="rotate(1 1525 915)">nsg_1983</text>
        </g>
      </svg>
    </section>
  </main>

  <footer class="status">
    <label class="search"><svg viewBox="0 0 14 14"><circle cx="6" cy="6" r="4.500" fill="none" stroke="#8a8a8a" stroke-width="1.200"/><path d="M9.500 9.500L13 13" stroke="#8a8a8a" stroke-width="1.600"/></svg><input type="text" placeholder="Zu suchender Typ (Strg+K)" aria-label="Suche"></label>
    <i class="fill"></i>
    <label for="coord">Koordinate</label><input id="coord" class="coord" value="473643.8,5397272.7">
    <svg class="sicon" viewBox="0 0 20 20"><path d="M3 3l3-2 8 8 2 5q-1 4-5 4-4-1-4-5z" fill="#333" stroke="#000"/><path d="M5 5l6 6M9 2l5 6M4 9l3 4" stroke="#fff"/><circle cx="12" cy="14" r="3.500" fill="#fff" stroke="#000"/><circle cx="12" cy="14" r="1" fill="#000"/><path d="M14 4l4-2M1 16l3-2" stroke="#444"/></svg>
    <label for="scale">Maßstab</label><select id="scale" class="scale"><option>1:2500</option></select>
    <svg class="sicon lock" viewBox="0 0 20 20"><path d="M6 10V6q0-4 4-4t4 4v4" fill="none" stroke="#888" stroke-width="2"/><rect x="4" y="9" width="12" height="10" rx="1" fill="#555"/></svg>
    <label for="mag">Vergrößerung</label><span class="spin"><input id="mag" value="100%"><button class="up" aria-label="Mehr"></button><button class="down" aria-label="Weniger"></button></span>
    <label for="rot" class="rot">Drehung</label><span class="spin"><input id="rot" value="0,0 °"><button class="up" aria-label="Mehr"></button><button class="down" aria-label="Weniger"></button></span>
    <label class="render"><input type="checkbox" checked>Zeichnen</label>
    <svg class="sicon crs" viewBox="0 0 20 20"><circle cx="10" cy="9" r="8" fill="#777"/><path d="M2 9h16M3.500 5h13M3.500 13h13M10 1v16M10 1q-7 8 0 16M10 1q7 8 0 16M4 18h12" fill="none" stroke="#eee"/></svg><span>EPSG:25832</span>
    <svg class="sicon msg" viewBox="0 0 22 22"><path d="M11 1a9.500 9 0 0 0 0 18q1 0 4 2v-3a9.500 9 0 0 0-4-17z" fill="#5e5e5e"/><path d="M5.500 9h2.500v2.500H5.500zM10 9h2.500v2.500H10zM14.500 9H17v2.500h-2.500z" fill="#fff"/></svg>
    <svg class="sicon puz" viewBox="0 0 22 22"><path d="M2 5h6q-2-3 1-4t3 4h3q2 2 5-1l1 3q-1 4-5 4v2q-3-1-3 2t3 2v4h-5q0-3-2-3t-2 3H2v-5q3 0 3-3t-3-2z" fill="#ccc" stroke="#666" stroke-width="1.300"/></svg>
    <svg class="size" viewBox="0 0 12 12"><path d="M9 1h2v2H9zM9 5h2v2H9zM5 5h2v2H5zM9 9h2v2H9zM5 9h2v2H5zM1 9h2v2H1z" fill="#b5b5b5"/></svg>
  </footer>

  <div class="mark-box"></div>
  <div class="caption">Bild 18</div>

  <section class="dialog" role="dialog" aria-labelledby="dlg-title">
    <header><svg class="logo"><use href="#logo"/></svg><h1 id="dlg-title">Vektorisieren (Raster nach Vektor)</h1><button aria-label="Schließen"><svg viewBox="0 0 14 14"><path d="M1 1l12 12M13 1L1 13"/></svg></button></header>
    <div class="dlg-body">
      <div class="tabs" role="tablist"><button role="tab" class="active">Parameter</button><button role="tab">Protokoll</button></div>
      <div class="panel">
        <div class="field"><label for="inlayer">Eingabelayer</label>
          <div class="line"><span class="combo"><svg><use href="#rast"/></svg><select id="inlayer" class="tall"><option>WT_kleiner_669m_SW [EPSG:25832]</option></select></span><button class="dots">...</button></div></div>
        <div class="field"><label for="band">Kanalnummer</label><select id="band"><option>Kanal 1 (Gray)</option></select></div>
        <div class="field"><label for="fname">Name des zu erzeugenden Feldes</label><input id="fname" type="text" value="DN"></div>
        <label class="check"><input type="checkbox">8-Verbindungen verwenden</label>
        <button class="adv"><svg viewBox="0 0 8 12"><path d="M1 0l6 6-6 6z"/></svg>Fortgeschrittene Parameter</button>
        <div class="field"><label for="out">Vektorisiert</label>
          <div class="line"><input id="out" type="text" placeholder="[In temporärer Datei speichern]"><button class="dots hot">...</button></div></div>
        <label class="check"><input type="checkbox" checked>Öffne Ausgabedatei nach erfolgreicher Ausführung</label>
        <div class="field call"><label for="cmd">GDAL/OGR Aufruf</label><textarea id="cmd" readonly>python3 -m gdal_polygonize "D:/Science/_QGIS für Pilzfreunde/geotiff_export/WT_kleiner_669m_SW.tif" C:/Users/Miggell/
AppData/Local/Temp/processing_99be990918a74846b21c11d7c726fbc0/26e6cec037294ece93507dc6e9e68eec/OUTPUT.gpkg -b
1 -f "GPKG" OUTPUT DN</textarea></div>
      </div>
      <div class="progress"><div class="bar"></div><span>0%</span><button class="btn" disabled>Abbruch</button></div>
      <div class="actions"><button class="btn batch">Als Batchprozess starten...</button><i class="fill"></i><button class="btn primary">Starte</button><button class="btn">Schließen</button><button class="btn">Hilfe</button></div>
    </div>
  </section>

  <ul class="popup" role="menu">
    <li role="menuitem">In temporärer Datei speichern</li>
    <li role="menuitem" class="hover">In Datei speichern...</li>
    <li role="menuitem">Dateikodierung ändern (System)...</li>
  </ul>
  <div class="mark-ring"></div>
  <svg class="cursor" viewBox="0 0 12 18"><path d="M.8 1v13.500l3-3 2.500 6 2.700-1-2.500-5.500H11z" fill="#a818d8" stroke="#4a0868"/></svg>
</div>
</body>
</html>
```
FILE: styles.css
```css
* { box-sizing: border-box; }

:root {
  --ui: "Open Sans", "Noto Sans", sans-serif;
  --form: "DejaVu Sans Condensed", "DejaVu Sans", sans-serif;
  --face: #efefef;
  --line: #a8a8a8;
}

body {
  margin: 0;
  height: 100vh;
  padding: 2px 6px 0 0;
  background: linear-gradient(#3f5d7c 2px, #0b37a0 2px);
  font: 14px/20px var(--ui);
  color: #000;
  overflow: hidden;
}

button, input, select, textarea { font: inherit; color: inherit; margin: 0; border-radius: 0; }
button { background: none; border: 0; padding: 0; display: flex; align-items: center; justify-content: center; }
i { font-style: normal; flex: none; }
svg { flex: none; display: block; }
h1, h2 { margin: 0; font: inherit; }
.defs { display: none; }
.fill { flex: 1; }

.icon-text { font: bold 13px "Open Sans", sans-serif; fill: #444; }
.icon-text.sm { font-size: 9px; }
.icon-text.it { font: italic bold 16px "Liberation Serif", serif; fill: #fff; }
.icon-text.se { font: bold 15px "Liberation Serif", serif; }
.icon-text.xs { font-size: 9px; fill: #2c4054; }
.icon-text.bk { font-size: 8px; fill: #111; }
.icon-text.wh { font-size: 14px; fill: #fff; font-weight: normal; }

.window {
  position: relative;
  height: 100%;
  display: flex;
  flex-direction: column;
  background: var(--face);
}

.titlebar { height: 36px; flex: none; display: flex; align-items: center; padding-left: 7px; background: #fff; color: #959595; }
.logo { width: 22px; height: 22px; margin-right: 4px; }
.winctl { margin-left: auto; display: flex; }
.winctl button { width: 58px; height: 30px; }
.winctl svg { width: 12px; height: 12px; stroke: #777; fill: none; }

.menubar { height: 27px; flex: none; display: flex; align-items: center; gap: 16px; padding: 3px 7px 0; background: #fff; border-bottom: 1px solid #e6e6e6; }
.menubar a { color: #959595; text-decoration: none; }

.toolrow { height: 34px; flex: none; display: flex; border-bottom: 1px solid var(--line); border-top: 1px solid #fafafa; }
.group { display: flex; align-items: center; padding-right: 2px; border-right: 1px solid var(--line); }
.group.open { border-right: 0; }
.grip { width: 11px; height: 26px; background: radial-gradient(circle at 4px 2px, #a0a0a0 1px, transparent 2px) 0 0 / 11px 4px; }
.tb { width: 31px; height: 28px; }
.tb svg { width: 23px; height: 23px; }
.tb.on { background: #bcdcf4; box-shadow: inset 0 0 0 1px #90c8f6; }
.tb.off { opacity: .45; filter: grayscale(1); }
.tb.wide { width: 37px; }
.drop { width: 15px; height: 6px; background: #000; clip-path: polygon(3px 0, 12px 0, 50% 5px); }
.drop.dim { background: #6a6a6a; }
.sep { width: 1px; height: 26px; margin: 0 3px; background: #c4c4c4; }
.gap { width: 25px; }
.value { width: 60px; height: 24px; border: 1px solid #555; background: #fff; padding: 0 2px; font: 12px var(--form); }

.work { flex: 1; min-height: 0; display: flex; }

.sidebar { width: 49px; flex: none; padding-top: 3px; border-bottom: 1px solid #ccc; }
.hgrip { display: block; height: 4px; margin: 0 3px 4px; background: radial-gradient(circle at 2px 2px, #a0a0a0 1px, transparent 2px) 0 0 / 4px 4px; }
.srow { height: 30px; display: flex; align-items: center; padding-left: 3px; }
.srow.mid { padding-left: 11px; }
.sb { width: 26px; height: 26px; }
.sb svg { width: 24px; height: 24px; }
.srow .drop { margin-left: 3px; }

.dock { width: 308px; flex: none; display: flex; flex-direction: column; }
.dock-title { height: 31px; flex: none; display: flex; align-items: center; gap: 8px; padding: 0 5px; background: #d9d9d9; border: 1px solid #bcbcbc; }
.dock-title h2 { flex: 1; padding-top: 5px; }
.dock-title svg { width: 17px; height: 17px; }
.dock-tools { height: 28px; flex: none; display: flex; align-items: center; gap: 5px; padding-left: 4px; }
.dock-tools svg { width: 18px; height: 18px; }
.dock-tools .drop { width: 12px; clip-path: polygon(1px 0, 11px 0, 50% 5px); }
.dock-tools .off { opacity: .5; }

.tree { flex: 1; margin: 0; padding: 1px 0 0; list-style: none; background: #fff; border: 1px solid #828282; border-bottom: 0; overflow: hidden; }
.tree li { position: relative; height: 24px; white-space: nowrap; overflow: hidden; display: flex; align-items: center; }
.tree li::after { content: ""; position: absolute; right: 0; top: 2px; width: 5px; height: 20px; background: #e4e4e4; }
.tree label { display: flex; align-items: center; }
.tw { width: 12px; height: 16px; margin: 0 10px 0 6px; }
.ic { width: 18px; height: 18px; margin: 0 6px 0 8px; }
.tree .dim { color: #7b7b7b; font-weight: bold; font-style: italic; font-size: 15px; }
.tree .strong { font-weight: bold; font-size: 15px; }
.tree .sel { background: linear-gradient(90deg, #fff 25px, #d9d9d9 25px); font-weight: bold; }
.sel span { text-decoration: underline; }
.tree .sel::after, .tree .legend::after { display: none; }
.legend { padding-left: 53px; gap: 6px; }
.swatch { width: 17px; height: 17px; background: #267212; }

input[type="checkbox"] { appearance: none; width: 16px; height: 16px; flex: none; border: 1px solid #333; background: #fff; }
input[type="checkbox"]:checked { background: #fff url("data:image/svg+xml,%3Csvg xmlns='http://www.w3.org/2000/svg' viewBox='0 0 14 14'%3E%3Cpath d='M2 7l3.500 4L12 3' fill='none' stroke='%23333' stroke-width='1.500'/%3E%3C/svg%3E"); }

.hscroll { height: 20px; flex: none; display: flex; background: var(--face); border: 1px solid #828282; border-top: 0; }
.hscroll button { width: 21px; }
.hscroll svg { width: 8px; height: 11px; fill: none; stroke: #444; stroke-width: 2; }
.track { flex: 1; }
.thumb { display: block; width: 60%; height: 100%; background: #cbcbcb; }

.canvas { flex: 1; min-width: 0; margin-left: 5px; background: #fff; border: 1px solid #828282; border-top-width: 0; overflow: hidden; }
.canvas svg { width: 100%; height: 100%; }
.labels { font: 16px var(--form); }

.status { height: 32px; flex: none; display: flex; align-items: center; padding-left: 3px; font: 12px/16px var(--form); white-space: nowrap; }
.status input, .status select { height: 22px; border: 1px solid #777; background: #fff; padding: 0 2px; }
.search { position: relative; width: 279px; }
.search svg { position: absolute; left: 9px; top: 4px; width: 13px; height: 13px; }
.status .search input { width: 100%; padding-left: 28px; }
.search input::placeholder, .panel input::placeholder { color: #7a7a7a; opacity: 1; }
.status .coord { width: 134px; margin-left: 3px; text-align: center; }
.sicon { width: 22px; height: 22px; margin: 0 14px 0 2px; }
.status .scale { width: 92px; margin-left: 3px; background-color: #fff; }
.lock { margin: 0 10px 0 6px; }
.spin { position: relative; width: 86px; margin-left: 3px; }
.spin input { width: 100%; display: block; }
.spin button { position: absolute; right: 1px; width: 14px; height: 10px; background: #e8e8e8; border: 1px solid #bbb; }
.spin button::after { content: ""; width: 8px; height: 5px; background: #000; clip-path: polygon(50% 0, 100% 100%, 0 100%); }
.spin .up { top: 1px; }
.spin .down { bottom: 1px; }
.spin .down::after { clip-path: polygon(0 0, 100% 0, 50% 100%); }
.rot { margin: 0 6px 0 12px; }
.render { display: flex; align-items: center; gap: 6px; margin-left: 6px; }
.status .render input { height: 16px; padding: 0; }
.crs { width: 20px; height: 20px; margin: 0 4px 0 19px; }
.msg { margin: 0 10px 0 18px; }
.puz { margin: 0 12px 0 0; }
.size { width: 12px; height: 12px; align-self: flex-end; }

select { appearance: none; background: #e1e1e1; border: 1px solid #a0a0a0; }
select, .status .scale { background-image: url("data:image/svg+xml,%3Csvg xmlns='http://www.w3.org/2000/svg' viewBox='0 0 10 10'%3E%3Cpath d='M1 3l4 4 4-4' fill='none' stroke='%23444'/%3E%3C/svg%3E"); background-repeat: no-repeat; background-size: 10px; background-position: right 6px center; }

/* Floating windows and marks over the main window */
.dialog {
  position: absolute;
  left: 388px;
  top: 108px;
  width: 797px;
  height: 792px;
  display: flex;
  flex-direction: column;
  background: var(--face);
  border: 1px solid #5c5c5c;
  box-shadow: 0 6px 18px rgba(0, 0, 0, .45);
}
.dialog header { height: 37px; flex: none; display: flex; align-items: center; padding: 0 15px 2px 9px; background: #fff; }
.dialog h1 { flex: 1; }
.dialog header button svg { width: 14px; height: 14px; stroke: #000; fill: none; }
.dlg-body { flex: 1; min-height: 0; display: flex; flex-direction: column; padding: 13px 15px 13px 14px; font: 12px/16px var(--form); }
.tabs { display: flex; align-items: flex-end; height: 23px; flex: none; }
.tabs button { width: 75px; height: 21px; border: 1px solid #d0d0d0; border-bottom: 0; }
.tabs .active { width: 92px; height: 24px; margin-bottom: -1px; background: #fff; z-index: 1; }
.panel { flex: 1; min-height: 0; display: flex; flex-direction: column; gap: 8px; padding: 5px; border: 1px solid #d6d6d6; }
.field { display: flex; flex-direction: column; gap: 5px; }
.field > label { line-height: 18px; }
.panel select, .panel input[type="text"] { width: 100%; height: 22px; padding: 0 3px; }
.panel input[type="text"] { border: 1px solid #777; background: #fff; }
.panel select.tall { height: 25px; padding-left: 27px; display: block; }
.line { display: flex; gap: 7px; }
.line input { flex: 1; }
.combo { position: relative; flex: 1; }
.combo svg { position: absolute; left: 7px; top: 4px; width: 17px; height: 17px; }
.dots { width: 24px; height: 20px; margin: 1px 1px 0 0; flex: none; background: #e1e1e1; border: 1px solid #a0a0a0; }
.dots.hot { background: #e5f1fb; border-color: #2a82b8; }
.check { display: flex; align-items: center; gap: 6px; height: 16px; }
.adv { height: 22px; justify-content: flex-start; gap: 9px; padding-left: 5px; font-weight: bold; }
.adv svg { width: 8px; height: 12px; fill: #333; }
.call { margin-top: auto; }
textarea { height: 192px; padding: 5px 4px; resize: none; border: 1px solid #777; background: #fff; white-space: pre; overflow: hidden; }
.progress { display: flex; align-items: center; margin-top: 33px; }
.bar { flex: 1; height: 24px; background: #e6e6e6; border: 1px solid #bcbcbc; }
.progress span { width: 47px; padding-left: 9px; }
.btn { width: 91px; height: 26px; background: #e1e1e1; border: 1px solid #adadad; }
.btn:disabled { background: #ccc; border-color: #bfbfbf; color: #838383; }
.btn.primary { border: 2px solid #0f78d4; }
.btn.batch { width: 159px; }
.actions { display: flex; gap: 9px; margin-top: 9px; }

.popup {
  position: absolute;
  left: 1152px;
  top: 433px;
  width: 288px;
  margin: 0;
  padding: 3px 3px 2px;
  list-style: none;
  background: #f2f2f2;
  border: 1px solid #c4c4c4;
  box-shadow: 4px 4px 3px rgba(0, 0, 0, .5);
}
.popup li { height: 24px; padding: 1px 0 0 34px; line-height: 22px; white-space: nowrap; }
.popup .hover { background: #90c8f6; }

.mark-box { position: absolute; left: 66px; top: 352px; width: 229px; height: 54px; border: 3px solid #f00000; }
.mark-ring { position: absolute; left: 1121px; top: 408px; width: 55px; height: 55px; border: 3px solid #e80c14; border-radius: 50%; }
.cursor { position: absolute; left: 1351px; top: 473px; width: 13px; height: 20px; }
.caption { position: absolute; left: 851px; top: 906px; width: 180px; height: 43px; border-radius: 10px; background: #ffff80; text-align: center; font: bold 23px/43px "Liberation Sans", Arial, sans-serif; }
```
